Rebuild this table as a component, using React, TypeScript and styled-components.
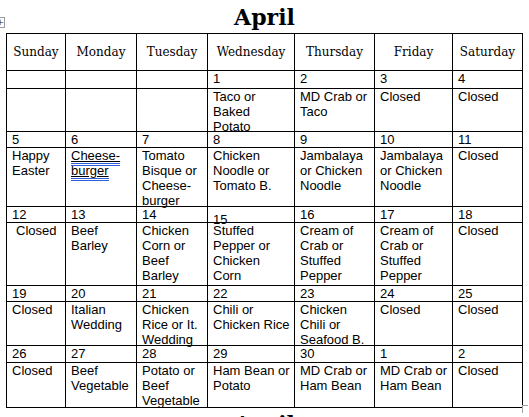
import styled, { createGlobalStyle } from 'styled-components';

const GlobalStyle = createGlobalStyle`
  html, body {
    margin: 0;
    padding: 0;
    background: #fff;
    overflow: hidden;
  }
`;

const Page = styled.div`
  position: relative;
  width: 517px;
  margin-left: 6px;
`;

const Title = styled.h1`
  margin: 0;
  height: 33px;
  text-align: center;
  font-family: 'DejaVu Serif', serif;
  font-weight: bold;
  font-size: 22px;
  line-height: 34px;
  color: #000;
`;

const NextTitle = styled(Title)`
  margin-top: -1px;
`;

// Word table move handle, sits over the page edge
const MoveHandle = styled.div`
  position: absolute;
  left: -11px;
  top: 17px;
  width: 8px;
  height: 9px;
  border: 1px solid #9a9a9a;
  background: #fff;
  font: 9px/9px 'DejaVu Sans', sans-serif;
  color: #555;
  text-align: right;
`;

const ResizeHandle = styled.div`
  position: absolute;
  right: -5px;
  bottom: -5px;
  width: 5px;
  height: 7px;
  border-left: 1px solid #a0a0a0;
  border-top: 1px solid #a0a0a0;
`;

const Grid = styled.div`
  position: relative;
  display: grid;
  grid-template-columns: 59px 71px 71px 87px 80px 78px 70px;
  grid-template-rows: 37px 18px 43px 16px 59px 16px 63px 16px 44px 17px 45px;
  border-left: 1px solid #000;
  border-top: 1px solid #000;
`;

const Cell = styled.div`
  box-sizing: border-box;
  border-right: 1px solid #000;
  border-bottom: 1px solid #000;
  min-width: 0;
  min-height: 0;
  font-family: 'Liberation Sans', Arial, sans-serif;
  font-size: 13px;
  line-height: 15px;
  color: #000;
  white-space: pre-line;
`;

const HeadCell = styled(Cell)`
  display: flex;
  align-items: center;
  justify-content: center;
  font-family: 'DejaVu Serif', serif;
  font-size: 12px;
  padding-top: 1px;
`;

const NumCell = styled(Cell)<{ $drop?: number }>`
  padding: ${p => p.$drop || 0}px 0 0 5px;
  overflow: visible;
`;

const FoodCell = styled(Cell)<{ $indent?: number }>`
  padding-left: ${p => 5 + (p.$indent || 0)}px;
  padding-right: 2px;
  overflow: visible;
  position: relative;
`;

const Misspelt = styled.span`
  text-decoration: underline;
  border-bottom: 3px double #2f5fd8;
`;

type Day = { n: string; food: string; drop?: number; indent?: number; flag?: boolean };

const days = ['Sunday', 'Monday', 'Tuesday', 'Wednesday', 'Thursday', 'Friday', 'Saturday'];

const weeks: Day[][] = [
  [
    { n: '', food: '' },
    { n: '', food: '' },
    { n: '', food: '' },
    { n: '1', food: 'Taco or\nBaked\nPotato' },
    { n: '2', food: 'MD Crab or\nTaco' },
    { n: '3', food: 'Closed' },
    { n: '4', food: 'Closed' },
  ],
  [
    { n: '5', food: 'Happy\nEaster' },
    { n: '6', food: 'Cheese-\nburger', flag: true },
    { n: '7', food: 'Tomato\nBisque or\nCheese-\nburger' },
    { n: '8', food: 'Chicken\nNoodle or\nTomato B.' },
    { n: '9', food: 'Jambalaya\nor Chicken\nNoodle' },
    { n: '10', food: 'Jambalaya\nor Chicken\nNoodle' },
    { n: '11', food: 'Closed' },
  ],
  [
    { n: '12', food: 'Closed', indent: 4 },
    { n: '13', food: 'Beef\nBarley' },
    { n: '14', food: 'Chicken\nCorn or\nBeef\nBarley' },
    { n: '15', food: 'Stuffed\nPepper or\nChicken\nCorn', drop: 5 },
    { n: '16', food: 'Cream of\nCrab or\nStuffed\nPepper' },
    { n: '17', food: 'Cream of\nCrab or\nStuffed\nPepper' },
    { n: '18', food: 'Closed' },
  ],
  [
    { n: '19', food: 'Closed' },
    { n: '20', food: 'Italian\nWedding' },
    { n: '21', food: 'Chicken\nRice or It.\nWedding' },
    { n: '22', food: 'Chili or\nChicken Rice' },
    { n: '23', food: 'Chicken\nChili or\nSeafood B.' },
    { n: '24', food: 'Closed' },
    { n: '25', food: 'Closed' },
  ],
  [
    { n: '26', food: 'Closed' },
    { n: '27', food: 'Beef\nVegetable' },
    { n: '28', food: 'Potato or\nBeef\nVegetable' },
    { n: '29', food: 'Ham Bean or\nPotato' },
    { n: '30', food: 'MD Crab or\nHam Bean' },
    { n: '1', food: 'MD Crab or\nHam Bean' },
    { n: '2', food: 'Closed' },
  ],
];

export default function App() {
  return (
    <>
      <GlobalStyle />
      <Page>
        <MoveHandle>+</MoveHandle>
        <Title>April</Title>
        <Grid>
          {days.map(d => (
            <HeadCell key={d}>{d}</HeadCell>
          ))}
          {weeks.map((week, w) => [
            ...week.map((d, i) => (
              <NumCell key={`n${w}-${i}`} $drop={d.drop}>
                {d.n}
              </NumCell>
            )),
            ...week.map((d, i) => (
              <FoodCell key={`f${w}-${i}`} $indent={d.indent}>
                {d.flag ? (
                  <>
                    <Misspelt>Cheese-</Misspelt>
                    {'\n'}
                    <Misspelt>burger</Misspelt>
                  </>
                ) : (
                  d.food
                )}
              </FoodCell>
            )),
          ])}
          <ResizeHandle />
        </Grid>
        <NextTitle>April</NextTitle>
      </Page>
    </>
  );
}
